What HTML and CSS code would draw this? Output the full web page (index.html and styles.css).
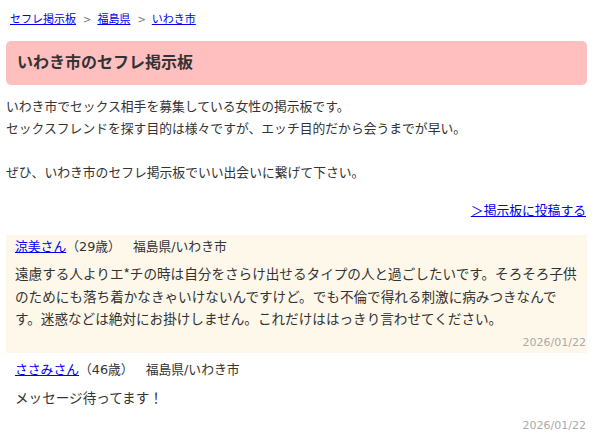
FILE: index.html
```html
<!DOCTYPE html>
<html lang="ja">
<head>
<meta charset="utf-8">
<title>いわき市のセフレ掲示板</title>
<link rel="stylesheet" href="styles.css">
</head>
<body>
<div class="page">
  <nav class="crumbs">
    <a href="#">セフレ掲示板</a><span class="sep">&gt;</span><a href="#">福島県</a><span class="sep">&gt;</span><a href="#">いわき市</a>
  </nav>
  <h1 class="title">いわき市のセフレ掲示板</h1>
  <p class="intro">いわき市でセックス相手を募集している女性の掲示板です。<br>セックスフレンドを探す目的は様々ですが、エッチ目的だから会うまでが早い。<br><br>ぜひ、いわき市のセフレ掲示板でいい出会いに繋げて下さい。</p>
  <div class="post-link"><a href="#">＞掲示板に投稿する</a></div>
  <div class="posts">
    <div class="post odd">
      <div class="meta"><a href="#">涼美さん</a><span class="age">（29歳）</span><span class="area">福島県/いわき市</span></div>
      <div class="msg">遠慮する人よりエ*チの時は自分をさらけ出せるタイプの人と過ごしたいです。そろそろ子供のためにも落ち着かなきゃいけないんですけど。でも不倫で得れる刺激に病みつきなんです。迷惑などは絶対にお掛けしません。これだけははっきり言わせてください。</div>
      <div class="date">2026/01/22</div>
    </div>
    <div class="post even">
      <div class="meta"><a href="#">ささみさん</a><span class="age">（46歳）</span><span class="area">福島県/いわき市</span></div>
      <div class="msg">メッセージ待ってます！</div>
      <div class="date">2026/01/22</div>
    </div>
  </div>
</div>
</body>
</html>
```
FILE: styles.css
```css
html, body {
  margin: 0;
  padding: 0;
  background: #fff;
}
body {
  font-family: "DejaVu Sans", "Noto Sans CJK JP", sans-serif;
  color: #333;
  font-size: 12.8px;
}
a {
  color: #0000ee;
  text-decoration: underline;
}
.page {
  padding: 11px 13px 0 6px;
}
.crumbs {
  font-size: 11px;
  line-height: 18px;
  padding-left: 4px;
  margin-bottom: 12px;
}
.crumbs .sep {
  color: #777;
  font-size: 10px;
  margin: 0 6px 0 7px;
}
.title {
  margin: 0;
  height: 44px;
  line-height: 44px;
  padding: 0 11px;
  font-size: 16px;
  font-weight: bold;
  color: #333;
  background: #ffbfbf;
  border-radius: 5px;
}
.intro {
  margin: 11px 0 16px;
  line-height: 22px;
  font-size: 12.8px;
}
.post-link {
  text-align: right;
  line-height: 22px;
  margin-bottom: 13px;
  padding-right: 1px;
}
.post {
  padding: 2px 1px 2px 9px;
}
.post.odd {
  background: #fdf8ea;
}
.post.even {
  padding-top: 7px;
  padding-bottom: 5px;
  border-bottom: 1px solid #eee;
}
.meta {
  line-height: 20px;
  font-size: 12.8px;
}
.area {
  margin-left: 12px;
}
.msg {
  margin-top: 5px;
  padding-right: 4px;
  font-size: 13.6px;
  line-height: 22.5px;
  font-family: "Noto Sans CJK JP", "DejaVu Sans", sans-serif;
}
.even .msg {
  margin-top: 6px;
}
.date {
  margin-top: 5px;
  text-align: right;
  font-size: 11px;
  line-height: 16px;
  color: #aaa;
}
.even .date {
  margin-top: 10px;
}
```
